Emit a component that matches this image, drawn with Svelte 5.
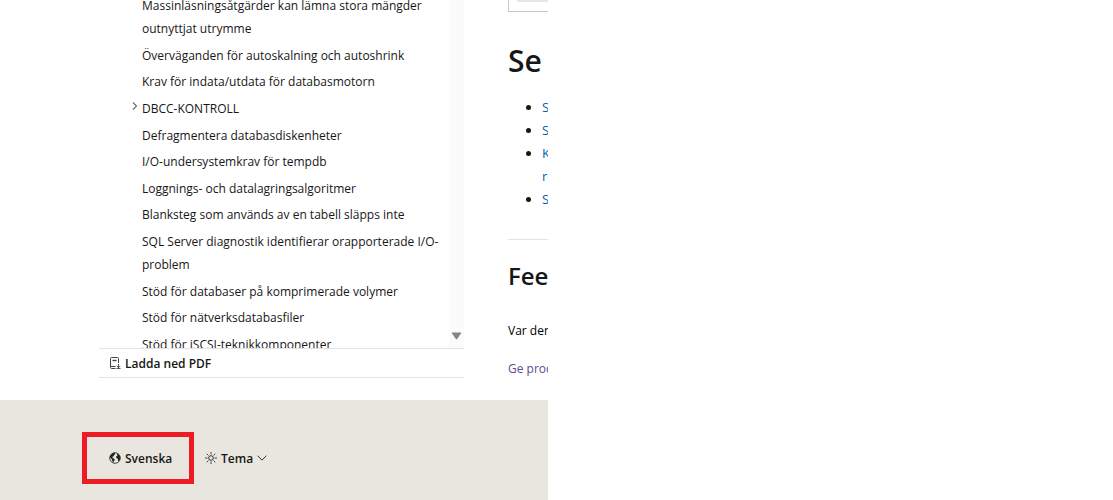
<script lang="ts">
    const articles = [
        { title: "Massinläsningsåtgärder kan lämna stora mängder outnyttjat utrymme" },
        { title: "Överväganden för autoskalning och autoshrink" },
        { title: "Krav för indata/utdata för databasmotorn" },
        { title: "DBCC-KONTROLL", expandable: true },
        { title: "Defragmentera databasdiskenheter" },
        { title: "I/O-undersystemkrav för tempdb" },
        { title: "Loggnings- och datalagringsalgoritmer" },
        { title: "Blanksteg som används av en tabell släpps inte" },
        { title: "SQL Server diagnostik identifierar orapporterade I/O-problem" },
        { title: "Stöd för databaser på komprimerade volymer" },
        { title: "Stöd för nätverksdatabasfiler" },
        { title: "Stöd för iSCSI-teknikkomponenter" },
    ];

    const related = ["S", "S", "K re", "S"];
</script>

<div class="page">
    <div class="columns">
        <aside class="sidebar">
            <div class="toc">
                <ul class="toc-list">
                    {#each articles as article}
                        <li>
                            {#if article.expandable}
                                <svg class="chevron" width="6" height="10" viewBox="0 0 6 10" aria-hidden="true">
                                    <path d="M1 1.5 4.5 5 1 8.5" fill="none" stroke="#666" stroke-width="1.1" />
                                </svg>
                            {/if}
                            <a href="#article">{article.title}</a>
                        </li>
                    {/each}
                </ul>
                <div class="scrollbar">
                    <svg width="11" height="8" viewBox="0 0 11 8" aria-hidden="true">
                        <path d="M1.3.5h8.4q.9 0 .4.8L6.2 7q-.7.8-1.4 0L.9 1.3Q.4.5 1.3.5z" fill="#868686" />
                    </svg>
                </div>
            </div>
            <a class="pdf" href="#pdf">
                <svg width="12" height="13" viewBox="0 0 12 13" fill="none" stroke="#444" aria-hidden="true">
                    <path d="M6.5 11.5H2.5Q1.5 11.5 1.5 10.500V1.500Q1.500.5 2.500.5h6q1 0 1 1V6M1.500 9.500h5" />
                    <path d="M3.500 3.500h4" stroke-width="1.400" />
                    <path d="M9.500 7v4M7.800 9l1.700 1.700L11.200 9M7.500 11.500h4" stroke-width=".9" />
                </svg>
                Ladda ned PDF
            </a>
        </aside>

        <main class="content">
            <div class="card"><div class="card-bar"></div></div>
            <h2>Se</h2>
            <ul class="related">
                {#each related as label}
                    <li><a href="#related">{label}</a></li>
                {/each}
            </ul>
            <hr />
            <h3>Fee</h3>
            <p class="question">Var den</p>
            <a class="visited" href="#feedback">Ge prod</a>
        </main>
    </div>

    <footer>
        <div class="highlight">
            <a href="#locale">
                <svg width="12" height="12" viewBox="0 0 12 12" aria-hidden="true">
                    <circle cx="6" cy="6" r="5.3" fill="none" stroke="#333" stroke-width=".9" />
                    <path d="M1 4.2 3 1.4 5.5.7 6.3 2 5 3.300 4.500 4.300 3.200 5 4 6.200 5.600 7 5.600 8.300 4.700 9.500 4.500 10.800 3.400 9.300 2.800 7.200.8 5.300zM7.800 1.500l1.700.7 1.600 2.500-.2 2.900-1.300 1.800-.8-1.800-.3-1.200L7.200 5.800 7.100 4.500l1.300-.8z" fill="#222" />
                </svg>
                Svenska
            </a>
        </div>
        <button class="theme" type="button">
            <svg width="12" height="12" viewBox="0 0 12 12" fill="none" stroke="#333" aria-hidden="true">
                <circle cx="6" cy="6" r="2.3" />
                <path d="M6 0v2.500M6 9.500V12M0 6h2.500M9.500 6H12M1.700 1.700l1.800 1.800M8.500 8.500l1.800 1.800M10.300 1.700 8.500 3.500M3.500 8.500l-1.800 1.800" stroke-width=".9" />
            </svg>
            Tema
            <svg width="10" height="6" viewBox="0 0 10 6" aria-hidden="true">
                <path d="M.6.7 5 5.100 9.400.7" fill="none" stroke="#333" />
            </svg>
        </button>
    </footer>
</div>

<style>
    :global(body) {
        background: #fff;
    }

    .page {
        max-width: 548px;
        overflow: hidden;
        font-family: "Open Sans", "Noto Sans", sans-serif;
        font-size: 12px;
        line-height: 23px;
        color: #171717;
    }

    a {
        color: inherit;
        text-decoration: none;
    }

    .columns {
        display: flex;
        gap: 44px;
        height: 400px;
    }

    .sidebar {
        flex: 0 0 365px;
        margin-left: 99px;
    }

    .toc {
        display: flex;
        height: 348px;
        overflow: hidden;
    }

    .toc-list {
        display: flex;
        flex: 1;
        flex-direction: column;
        justify-content: space-between;
        height: 362px;
        margin: -6px 0 0;
        padding: 0 0 0 43px;
        list-style: none;
    }

    .toc-list li {
        display: flex;
        align-items: center;
    }

    .chevron {
        flex: none;
        margin: 0 4px 4px -10px;
    }

    .scrollbar {
        display: flex;
        align-items: flex-end;
        justify-content: center;
        width: 15px;
        padding-bottom: 8px;
        box-sizing: border-box;
        background: #fbfbfb;
    }

    .pdf {
        display: flex;
        align-items: center;
        gap: 4px;
        height: 28px;
        padding-left: 10px;
        border-top: 1px solid #e3e3e3;
        border-bottom: 1px solid #e3e3e3;
        font-weight: 600;
    }

    .content {
        flex: 1;
        min-width: 0;
        overflow: hidden;
    }

    .card {
        height: 11px;
        padding-left: 8px;
        border: 1px solid #c8c8c8;
        border-width: 0 0 1px 1px;
    }

    .card-bar {
        height: 2px;
        background: #e6e6e6;
        border-radius: 0 0 0 2px;
    }

    h2 {
        margin: 29px 0 0;
        font-size: 30px;
        font-weight: 600;
        line-height: 40px;
    }

    .related {
        margin: 15px 0 0;
        padding-left: 34px;
        font-size: 13px;
    }

    .related a {
        color: #0065b3;
    }

    hr {
        height: 1px;
        margin: 28px 0 0;
        border: 0;
        background: #e3e3e3;
    }

    h3 {
        margin: 20px 0 0;
        font-size: 24px;
        font-weight: 600;
        line-height: 32px;
    }

    .question {
        margin: 27px 0 15px;
        font-weight: 500;
        color: #000;
        white-space: nowrap;
    }

    .visited {
        color: #624a91;
        white-space: nowrap;
    }

    footer {
        display: flex;
        align-items: center;
        height: 100px;
        padding: 16px 82px 0;
        box-sizing: border-box;
        background: #e8e6df;
        font-weight: 600;
    }

    .highlight {
        display: flex;
        align-items: center;
        width: 112px;
        height: 52px;
        padding-left: 22px;
        box-sizing: border-box;
        border: 5px solid #ed1c24;
    }

    .highlight a,
    .theme {
        display: flex;
        align-items: center;
        gap: 4px;
    }

    .theme {
        margin-left: 11px;
        padding: 0;
        border: 0;
        background: none;
        color: inherit;
        font: inherit;
        cursor: pointer;
    }
</style>
